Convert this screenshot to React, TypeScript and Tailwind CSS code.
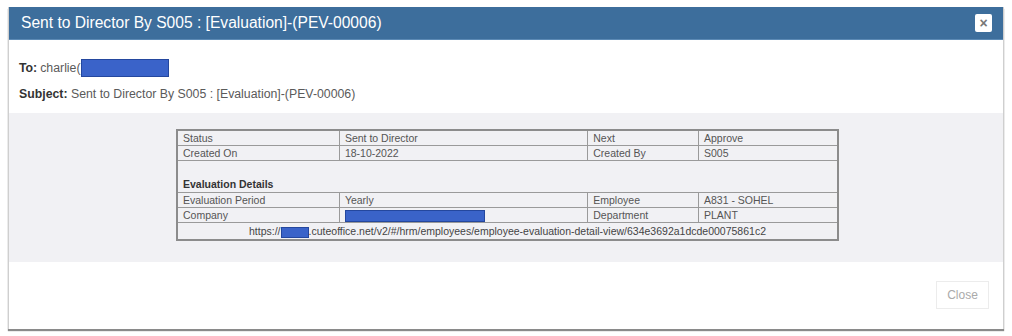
import React from 'react';

const cell = 'border border-[#9a9a9a] px-[5px] h-[15px] leading-[14px] align-middle';

const Redact: React.FC<{ w: string; h: string }> = ({ w, h }) => (
  <span className={`inline-block align-middle bg-[#3a63c9] border border-[#24479e] ${w} ${h}`} />
);

export default function App() {
  return (
    <div className="w-[1012px] h-[336px] bg-white overflow-hidden font-['Liberation_Sans',Arial,sans-serif] text-[#555]">
      {/* backdrop line above modal */}
      <div className="h-[7px]" />

      <div className="mx-[8px] w-[996px] border-x border-[#cfcfcf] shadow-[0_2px_1px_#8a8a8a]">
        {/* Header */}
        <div className="h-[33px] bg-[#3d6e9c] flex items-center justify-between pl-[12px] pr-[11px] border-b border-[#5c8ab5]">
          <span className="text-white text-[15.6px] leading-none">
            Sent to Director By S005 : [Evaluation]-(PEV-00006)
          </span>
          <button className="w-[17px] h-[18px] bg-white rounded-[2px] flex items-center justify-center text-[#777] text-[14px] font-bold leading-none">
            ×
          </button>
        </div>

        {/* Mail meta */}
        <div className="bg-white h-[73px] px-[10px] pt-[19px] text-[12.3px] text-[#5a5a5a]">
          <div className="flex items-center h-[18px]">
            <span className="font-bold text-[#333]">To:</span>
            <span className="ml-[3px]">charlie(</span>
            <Redact w="w-[88px]" h="h-[18px]" />
          </div>
          <div className="mt-[8px]">
            <span className="font-bold text-[#333]">Subject:</span> Sent to Director By S005 : [Evaluation]-(PEV-00006)
          </div>
        </div>

        {/* Body */}
        <div className="bg-[#f1f1f4] h-[149px] pt-[16px]">
          <table className="ml-[167px] w-[663px] border-collapse border-2 border-[#8c8c8c] text-[10.5px] text-[#555]">
            <colgroup>
              <col className="w-[163px]" />
              <col className="w-[249px]" />
              <col className="w-[111px]" />
              <col className="w-[140px]" />
            </colgroup>
            <tbody>
              <tr>
                <td className={cell}>Status</td>
                <td className={cell}>Sent to Director</td>
                <td className={cell}>Next</td>
                <td className={cell}>Approve</td>
              </tr>
              <tr>
                <td className={cell}>Created On</td>
                <td className={cell}>18-10-2022</td>
                <td className={cell}>Created By</td>
                <td className={cell}>S005</td>
              </tr>
              <tr>
                <td colSpan={4} className="border border-[#9a9a9a] px-[5px] pt-[16px] pb-[1px] leading-[14px] font-bold text-[#333]">
                  Evaluation Details
                </td>
              </tr>
              <tr>
                <td className={cell}>Evaluation Period</td>
                <td className={cell}>Yearly</td>
                <td className={cell}>Employee</td>
                <td className={cell}>A831 - SOHEL</td>
              </tr>
              <tr>
                <td className={cell}>Company</td>
                <td className={cell}>
                  <Redact w="w-[140px]" h="h-[12px]" />
                </td>
                <td className={cell}>Department</td>
                <td className={cell}>PLANT</td>
              </tr>
              <tr>
                <td colSpan={4} className="border border-[#9a9a9a] h-[17px] text-center leading-[14px] text-[#444]">
                  https://<Redact w="w-[28px]" h="h-[11px]" />.cuteoffice.net/v2/#/hrm/employees/employee-evaluation-detail-view/634e3692a1dcde00075861c2
                </td>
              </tr>
            </tbody>
          </table>
        </div>

        {/* Footer */}
        <div className="bg-white h-[67px] flex justify-end items-start pt-[19px] pr-[14px]">
          <button className="w-[53px] h-[28px] bg-white border border-[#ececec] text-[12px] text-[#aaa]">
            Close
          </button>
        </div>
      </div>
    </div>
  );
}
